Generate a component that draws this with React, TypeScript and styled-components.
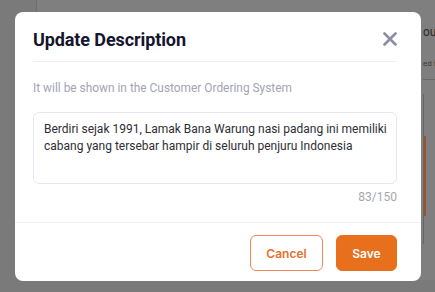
import React from "react";
import styled, { createGlobalStyle } from "styled-components";

const GlobalStyle = createGlobalStyle`
  html, body {
    margin: 0;
    padding: 0;
    width: 435px;
    height: 292px;
    overflow: hidden;
    font-family: Roboto, "Liberation Sans", sans-serif;
  }
`;

const Screen = styled.div`
  position: relative;
  width: 435px;
  height: 292px;
  background: #7a7a7a;
  overflow: hidden;
`;

// page content behind the overlay
const BehindCard = styled.div`
  position: absolute;
  left: 36px;
  top: -20px;
  width: 420px;
  height: 300px;
  background: #7f7f7f;
  border-left: 1px solid #6e6e6e;
  border-radius: 8px;
  display: flex;
  flex-direction: column;
  padding-left: 386px;
  box-sizing: border-box;
  color: #2a2a2a;
  font-size: 11px;
`;

const BehindTitle = styled.div`
  margin-top: 45px;
  font-size: 12px;
  white-space: nowrap;
`;

const BehindSub = styled.div`
  margin-top: 20px;
  font-size: 8px;
  white-space: nowrap;
  color: #3a3a3a;
`;

const BehindRule = styled.div`
  margin-top: 11px;
  height: 1px;
  background: #6a6a6a;
`;

const BehindChart = styled.div`
  margin-top: 14px;
  height: 150px;
  border-left: 1px solid #666;
  position: relative;
  display: flex;
  flex-direction: column;
  justify-content: flex-end;
`;

const BehindBar = styled.div`
  width: 2px;
  height: 80px;
  margin-bottom: 28px;
  background: #9a5424;
`;

const Backdrop = styled.div`
  position: absolute;
  inset: 0;
`;

const Modal = styled.div`
  position: absolute;
  left: 15px;
  top: 12px;
  width: 406px;
  height: 269px;
  background: #ffffff;
  border-radius: 8px;
  display: flex;
  flex-direction: column;
`;

const Header = styled.div`
  margin: 0 24px 0 18px;
  height: 50px;
  box-sizing: border-box;
  padding-top: 6px;
  border-bottom: 1px solid #ededf8;
  display: flex;
  align-items: center;
  justify-content: space-between;
`;

const Title = styled.h2`
  margin: 0;
  font-family: Roboto, "Liberation Sans", sans-serif;
  font-weight: 700;
  font-size: 18px;
  color: #15152e;
  letter-spacing: -0.1px;
`;

const CloseButton = styled.button`
  border: none;
  background: none;
  padding: 0;
  margin-right: -2px;
  margin-top: -2px;
  width: 18px;
  height: 18px;
  display: flex;
  align-items: center;
  justify-content: center;
  cursor: pointer;
`;

const Body = styled.div`
  padding: 18px 24px 0 18px;
  display: flex;
  flex-direction: column;
`;

const Hint = styled.p`
  margin: 0;
  font-size: 11.9px;
  color: #a4a4b4;
  line-height: 16px;
`;

const TextBox = styled.div`
  margin-top: 16px;
  height: 72px;
  box-sizing: border-box;
  border: 1px solid #e6e6f6;
  border-radius: 6px;
  padding: 8px 4px 8px 10px;
  font-size: 12px;
  line-height: 17px;
  color: #2e2e33;
`;

const Counter = styled.div`
  margin-top: 6px;
  text-align: right;
  font-size: 12px;
  color: #a6a6ae;
`;

const Footer = styled.div`
  margin-top: auto;
  height: 59px;
  box-sizing: border-box;
  border-top: 1px solid #f0f0f2;
  display: flex;
  align-items: flex-start;
  justify-content: flex-end;
  gap: 13px;
  padding: 12px 24px 0 0;
`;

const Button = styled.button<{ $filled?: boolean }>`
  height: 36px;
  width: ${(p) => (p.$filled ? "61px" : "73px")};
  box-sizing: border-box;
  border-radius: 6px;
  padding: 0;
  font-family: Inter, Roboto, sans-serif;
  font-weight: 600;
  font-size: 12px;
  cursor: pointer;
  border: 1.5px solid;
  background: ${(p) => (p.$filled ? "#e8701c" : "#ffffff")};
  border-color: ${(p) => (p.$filled ? "#e8701c" : "#ef8a55")};
  color: ${(p) => (p.$filled ? "#ffffff" : "#e8702c")};
`;

export default function App() {
  return (
    <>
      <GlobalStyle />
      <Screen>
        <BehindCard>
          <BehindTitle>ount</BehindTitle>
          <BehindSub>ed from</BehindSub>
          <BehindRule />
          <BehindChart>
            <BehindBar />
          </BehindChart>
        </BehindCard>
        <Backdrop />
        <Modal>
          <Header>
            <Title>Update Description</Title>
            <CloseButton aria-label="Close">
              <svg width="14" height="14" viewBox="0 0 14 14">
                <path
                  d="M1.5 1.5 L12.5 12.5 M12.5 1.5 L1.5 12.5"
                  stroke="#8c8ca6"
                  strokeWidth="2.6"
                  strokeLinecap="round"
                />
              </svg>
            </CloseButton>
          </Header>
          <Body>
            <Hint>It will be shown in the Customer Ordering System</Hint>
            <TextBox>
              Berdiri sejak 1991, Lamak Bana Warung nasi padang ini memiliki cabang yang tersebar hampir di seluruh penjuru Indonesia
            </TextBox>
            <Counter>83/150</Counter>
          </Body>
          <Footer>
            <Button>Cancel</Button>
            <Button $filled>Save</Button>
          </Footer>
        </Modal>
      </Screen>
    </>
  );
}
